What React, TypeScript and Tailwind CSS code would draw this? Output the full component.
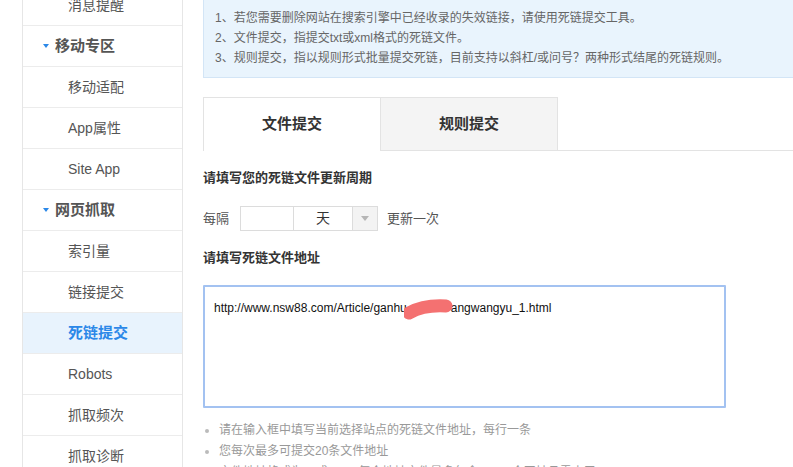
import React from "react";

const menu = [
  { name: "消息提醒", type: "item" },
  { name: "移动专区", type: "group" },
  { name: "移动适配", type: "item" },
  { name: "App属性", type: "item" },
  { name: "Site App", type: "item" },
  { name: "网页抓取", type: "group" },
  { name: "索引量", type: "item" },
  { name: "链接提交", type: "item" },
  { name: "死链提交", type: "active" },
  { name: "Robots", type: "item" },
  { name: "抓取频次", type: "item" },
  { name: "抓取诊断", type: "item" },
];

const tips = [
  "请在输入框中填写当前选择站点的死链文件地址，每行一条",
  "您每次最多可提交20条文件地址",
  "文件地址格式为txt或xml，每个地址文件最多包含50000个网址且需小于10MB",
];

function Sidebar() {
  return (
    <aside className="ml-[22px] w-[161px] shrink-0 border-x border-[#e6e6e6] mt-[-15px]">
      {menu.map((m) => {
        if (m.type === "group") {
          return (
            <div
              key={m.name}
              className="h-[41px] border-b border-[#ececec] flex items-center pl-[20px] text-[15px] font-bold text-[#555]"
            >
              <span className="w-0 h-0 border-l-[3.5px] border-r-[3.5px] border-t-[4px] border-l-transparent border-r-transparent border-t-[#2b88e8] mr-[6px]" />
              {m.name}
            </div>
          );
        }
        if (m.type === "active") {
          return (
            <div
              key={m.name}
              className="h-[41px] border-b border-[#ececec] flex items-center pl-[45px] bg-[#e8f3fd] text-[15px] font-bold text-[#2b88e8]"
            >
              {m.name}
            </div>
          );
        }
        return (
          <div
            key={m.name}
            className="h-[41px] border-b border-[#ececec] flex items-center pl-[45px] text-[14px] text-[#555]"
          >
            {m.name}
          </div>
        );
      })}
    </aside>
  );
}

export default function App() {
  return (
    <div className="w-[793px] h-[467px] overflow-hidden bg-white flex font-['Liberation_Sans','Noto_Sans_CJK_SC',sans-serif]">
      <Sidebar />

      <main className="ml-[20px] flex-1 min-w-0">
        {/* notice */}
        <div className="bg-[#e9f4fd] border-l border-b border-[#d3e5f6] pt-[8px] pb-[9px] pl-[11px] text-[12px] leading-[20px] text-[#666] whitespace-nowrap">
          <p>1、若您需要删除网站在搜索引擎中已经收录的失效链接，请使用死链提交工具。</p>
          <p>2、文件提交，指提交txt或xml格式的死链文件。</p>
          <p>3、规则提交，指以规则形式批量提交死链，目前支持以斜杠/或问号？两种形式结尾的死链规则。</p>
        </div>

        {/* tabs */}
        <div className="mt-[19px] flex">
          <div className="w-[178px] h-[54px] border-l border-t border-r border-[#e3e3e3] bg-white flex items-center justify-center text-[15px] font-bold text-[#333]">
            文件提交
          </div>
          <div className="w-[177px] h-[54px] border-t border-r border-b border-[#e3e3e3] bg-[#f4f4f4] flex items-center justify-center text-[15px] font-bold text-[#333]">
            规则提交
          </div>
          <div className="flex-1 h-[54px] border-b border-[#e3e3e3]" />
        </div>

        <h3 className="mt-[17px] text-[13px] leading-[20px] font-bold text-[#333]">
          请填写您的死链文件更新周期
        </h3>

        <div className="mt-[18px] flex items-center text-[13px] text-[#555]">
          <span className="w-[37px]">每隔</span>
          <div className="flex h-[25px] border border-[#dcdcdc]">
            <div className="w-[53px] border-r border-[#dcdcdc]" />
            <div className="w-[59px] border-r border-[#dcdcdc] flex items-center justify-center text-[14px] text-[#333]">
              天
            </div>
            <div className="w-[24px] bg-[#f3f3f3] flex items-center justify-center">
              <span className="w-0 h-0 border-l-[4px] border-r-[4px] border-t-[5px] border-l-transparent border-r-transparent border-t-[#b5b5b5]" />
            </div>
          </div>
          <span className="ml-[9px]">更新一次</span>
        </div>

        <h3 className="mt-[17px] text-[13px] leading-[20px] font-bold text-[#333]">
          请填写死链文件地址
        </h3>

        <div className="mt-[17px] w-[523px] h-[123px] border-2 border-[#a3c2f1] rounded-[1px] px-[9px] py-[12px] text-[12px] leading-[18px] text-[#111] whitespace-nowrap">
          http://www.nsw88.com/Article/ganhu
          <span className="relative inline-block w-[44px] h-[12px] align-middle">
            <svg
              className="absolute left-[-3px] top-[-5px]"
              width="50"
              height="22"
              viewBox="0 0 50 22"
            >
              <path
                d="M5 15 C 14 10, 26 7, 42 8"
                stroke="#f47171"
                strokeWidth="13"
                strokeLinecap="round"
                fill="none"
              />
            </svg>
          </span>
          angwangyu_1.html
        </div>

        <ul className="mt-[12px] text-[12px] leading-[21px] text-[#999]">
          {tips.map((t) => (
            <li key={t} className="flex items-center whitespace-nowrap">
              <span className="ml-[2px] mr-[10px] w-[4px] h-[4px] rounded-full bg-[#bbb]" />
              {t}
            </li>
          ))}
        </ul>
      </main>
    </div>
  );
}
